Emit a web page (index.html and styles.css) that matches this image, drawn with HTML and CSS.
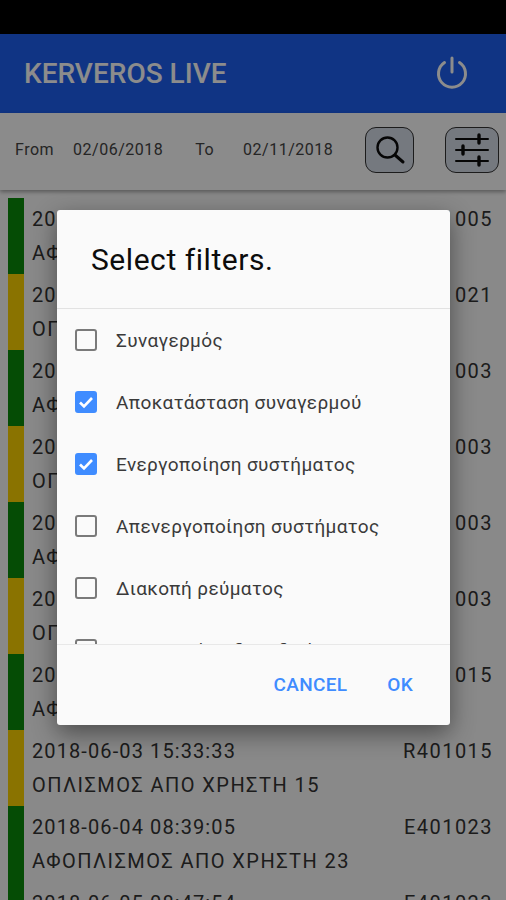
FILE: index.html
```html
<!DOCTYPE html>
<html lang="en">
<head>
    <meta charset="UTF-8">
    <meta name="viewport" content="width=device-width, initial-scale=1.0">
    <title>Kerveros Live</title>
    <link rel="stylesheet" href="styles.css">
</head>
<body>
    <div class="status-bar"></div>
    <header class="app-bar">
        <span class="app-title">KERVEROS LIVE</span>
        <svg class="power-icon" width="34" height="34" viewBox="0 0 34 34" fill="none" stroke="currentColor" stroke-width="3" stroke-linecap="round">
            <path d="M17 3v14"/>
            <path d="M9.5 7.5a13.5 13.5 0 1 0 15 0"/>
        </svg>
    </header>
    <div class="toolbar">
        <span class="label from-label">From</span>
        <span class="label from-date">02/06/2018</span>
        <span class="label to-label">To</span>
        <span class="label to-date">02/11/2018</span>
        <button class="tool-btn search-btn">
            <svg width="34" height="34" viewBox="0 0 34 34" fill="none" stroke="#0c0c0c" stroke-linecap="round">
                <circle cx="14.5" cy="14.5" r="10" stroke-width="2.4"/>
                <path d="M22 22l8 7" stroke-width="3"/>
            </svg>
        </button>
        <button class="tool-btn filter-btn">
            <svg width="36" height="36" viewBox="0 0 36 36" fill="none" stroke="#0c0c0c" stroke-linecap="round">
                <path d="M2 7h32M2 18h32M2 29h32" stroke-width="2"/>
                <path d="M25 3v8M9 14v8M25 25v8" stroke-width="3.4"/>
            </svg>
        </button>
    </div>
    <div class="event-list">
        <div class="event-row armed-off"><div class="event-text"><div class="event-top"><span>2018-06-01 08:12:40</span><span class="event-code">E401005</span></div><div class="event-name">ΑΦΟΠΛΙΣΜΟΣ ΑΠΟ ΧΡΗΣΤΗ 5</div></div></div>
        <div class="event-row armed-on"><div class="event-text"><div class="event-top"><span>2018-06-01 17:45:12</span><span class="event-code">R401021</span></div><div class="event-name">ΟΠΛΙΣΜΟΣ ΑΠΟ ΧΡΗΣΤΗ 21</div></div></div>
        <div class="event-row armed-off"><div class="event-text"><div class="event-top"><span>2018-06-02 08:20:31</span><span class="event-code">E401003</span></div><div class="event-name">ΑΦΟΠΛΙΣΜΟΣ ΑΠΟ ΧΡΗΣΤΗ 3</div></div></div>
        <div class="event-row armed-on"><div class="event-text"><div class="event-top"><span>2018-06-02 13:02:18</span><span class="event-code">R401003</span></div><div class="event-name">ΟΠΛΙΣΜΟΣ ΑΠΟ ΧΡΗΣΤΗ 3</div></div></div>
        <div class="event-row armed-off"><div class="event-text"><div class="event-top"><span>2018-06-02 16:30:44</span><span class="event-code">E401003</span></div><div class="event-name">ΑΦΟΠΛΙΣΜΟΣ ΑΠΟ ΧΡΗΣΤΗ 3</div></div></div>
        <div class="event-row armed-on"><div class="event-text"><div class="event-top"><span>2018-06-02 21:15:09</span><span class="event-code">R401003</span></div><div class="event-name">ΟΠΛΙΣΜΟΣ ΑΠΟ ΧΡΗΣΤΗ 3</div></div></div>
        <div class="event-row armed-off"><div class="event-text"><div class="event-top"><span>2018-06-03 09:05:27</span><span class="event-code">E401015</span></div><div class="event-name">ΑΦΟΠΛΙΣΜΟΣ ΑΠΟ ΧΡΗΣΤΗ 15</div></div></div>
        <div class="event-row armed-on"><div class="event-text"><div class="event-top"><span>2018-06-03 15:33:33</span><span class="event-code">R401015</span></div><div class="event-name">ΟΠΛΙΣΜΟΣ ΑΠΟ ΧΡΗΣΤΗ 15</div></div></div>
        <div class="event-row armed-off"><div class="event-text"><div class="event-top"><span>2018-06-04 08:39:05</span><span class="event-code">E401023</span></div><div class="event-name">ΑΦΟΠΛΙΣΜΟΣ ΑΠΟ ΧΡΗΣΤΗ 23</div></div></div>
        <div class="event-row armed-off"><div class="event-text"><div class="event-top"><span>2018-06-05 08:47:54</span><span class="event-code">E401023</span></div><div class="event-name">ΑΦΟΠΛΙΣΜΟΣ ΑΠΟ ΧΡΗΣΤΗ 23</div></div></div>
    </div>

    <div class="scrim">
        <div class="dialog">
            <h2 class="dialog-title">Select filters.</h2>
            <div class="filter-list">
                <label class="filter-item"><span class="check"></span>Συναγερμός</label>
                <label class="filter-item"><span class="check checked"><svg width="18" height="18" viewBox="0 0 18 18" fill="none" stroke="#fff" stroke-width="2.6"><path d="M3 9.5l4 4 8-8.5"/></svg></span>Αποκατάσταση συναγερμού</label>
                <label class="filter-item"><span class="check checked"><svg width="18" height="18" viewBox="0 0 18 18" fill="none" stroke="#fff" stroke-width="2.6"><path d="M3 9.5l4 4 8-8.5"/></svg></span>Ενεργοποίηση συστήματος</label>
                <label class="filter-item"><span class="check"></span>Απενεργοποίηση συστήματος</label>
                <label class="filter-item"><span class="check"></span>Διακοπή ρεύματος</label>
                <label class="filter-item"><span class="check"></span>Αποστολή εβδομαδιαίας</label>
            </div>
            <div class="dialog-actions">
                <span class="action">CANCEL</span>
                <span class="action">OK</span>
            </div>
        </div>
    </div>
</body>
</html>
```

FILE: styles.css
```css
html, body {
    margin: 0;
    height: 900px;
    overflow: hidden;
}
body {
    font-family: Roboto, "Noto Sans", sans-serif;
    background: #fafafa;
    color: #333;
}
.status-bar {
    height: 34px;
    background: #000;
    position: relative;
    z-index: 2;
}
.app-bar {
    height: 79px;
    background: #1e60f0;
    color: #fff;
    display: flex;
    align-items: center;
    justify-content: space-between;
    padding: 0 37px 0 24px;
    box-sizing: border-box;
}
.app-title {
    font-size: 28px;
    font-weight: 500;
}
.power-icon {
    margin-bottom: 3px;
}
.toolbar {
    height: 77px;
    background: #fdfdfd;
    box-shadow: 0 2px 4px rgba(0,0,0,.35);
    display: flex;
    align-items: center;
    position: relative;
    box-sizing: border-box;
    padding-left: 15px;
}
.label {
    font-size: 16px;
    letter-spacing: .5px;
    color: #444;
    margin-bottom: 5px;
}
.from-date { margin-left: 19px; }
.to-label { margin-left: 32px; }
.to-date { margin-left: 29px; }
.tool-btn {
    height: 46px;
    background: #d6dce8;
    border: 1.5px solid #333;
    border-radius: 11px;
    padding: 0;
    display: flex;
    align-items: center;
    justify-content: center;
    margin-bottom: 3px;
}
.search-btn { width: 49px; margin-left: 32px; }
.filter-btn { width: 54px; margin-left: 31px; }
.event-list {
    padding: 8px 13px 0 8px;
}
.event-row {
    height: 76px;
    border-left: 16px solid;
    box-sizing: border-box;
    font-size: 20px;
    letter-spacing: 1.1px;
    color: #333;
}
.event-code, .event-name {
    letter-spacing: 1.45px;
}
.armed-off { border-left-color: #0a8a0a; }
.armed-on { border-left-color: #fcd200; }
.event-text {
    padding: 9px 0 0 8px;
    display: flex;
    flex-direction: column;
    gap: 10px;
    line-height: 24px;
}
.event-top {
    display: flex;
    justify-content: space-between;
}
.scrim {
    position: absolute;
    top: 34px;
    left: 0;
    right: 0;
    bottom: 0;
    background: rgba(0,0,0,.45);
}
.dialog {
    position: absolute;
    top: 176px;
    left: 57px;
    width: 393px;
    height: 515px;
    background: #fafafa;
    border-radius: 3px;
    box-shadow: 0 8px 24px rgba(0,0,0,.45);
    display: flex;
    flex-direction: column;
}
.dialog-title {
    margin: 0;
    height: 99px;
    box-sizing: border-box;
    padding: 33px 0 0 34px;
    font-size: 30px;
    letter-spacing: .55px;
    line-height: 34px;
    font-weight: 400;
    color: #0c0c0c;
    border-bottom: 1px solid #e2e2e2;
}
.filter-list {
    height: 335px;
    overflow: hidden;
    box-sizing: border-box;
}
.filter-item {
    height: 62px;
    display: flex;
    align-items: center;
    gap: 19px;
    padding-left: 18px;
    font-size: 19px;
    letter-spacing: .36px;
    color: #3a3a3a;
}
.check {
    width: 22px;
    height: 22px;
    box-sizing: border-box;
    border: 2px solid #7a7a7a;
    border-radius: 3px;
    display: flex;
    align-items: center;
    justify-content: center;
}
.check.checked {
    background: #3f8cff;
    border-color: #3f8cff;
}
.dialog-actions {
    flex: 1;
    border-top: 1px solid #e8e8e8;
    display: flex;
    align-items: center;
    justify-content: flex-end;
    gap: 40px;
    padding-right: 37px;
    padding-bottom: 2px;
}
.action {
    font-size: 19px;
    font-weight: 500;
    letter-spacing: .3px;
    color: #3f8cff;
}
```
